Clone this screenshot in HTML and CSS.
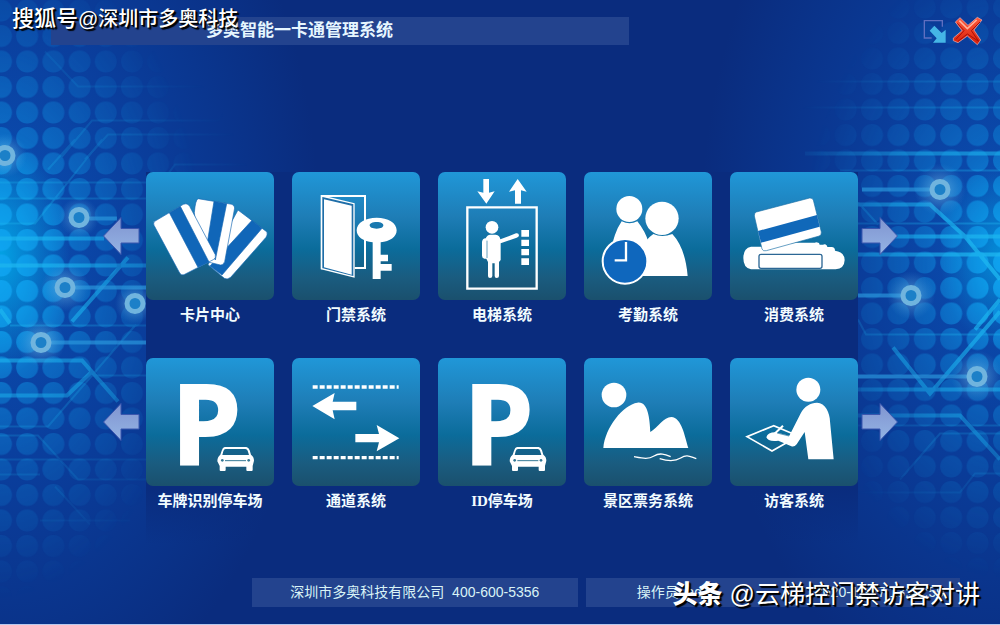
FILE: index.html
```html
<!DOCTYPE html>
<html lang="zh-CN">
<head>
<meta charset="utf-8">
<meta name="viewport" content="width=device-width, initial-scale=1">
<title>多奥智能一卡通管理系统</title>
<link rel="stylesheet" href="styles.css">
</head>
<body>
<div class="page">
  <div class="backdrop" aria-hidden="true">
    <svg class="circuit" viewBox="0 0 320 625" preserveAspectRatio="xMinYMid slice">
      <defs>
        <pattern id="dotsL" x="-12" y="49" width="26.2" height="25.5" patternUnits="userSpaceOnUse"><circle cx="13" cy="13" r="11"/></pattern>
        <radialGradient id="fadeL" gradientUnits="userSpaceOnUse" cx="0" cy="0" r="1" gradientTransform="translate(-10 265) scale(215 335)">
          <stop offset="0" stop-color="#fff"/><stop offset=".2" stop-color="#fff" stop-opacity=".7"/><stop offset=".4" stop-color="#fff" stop-opacity=".38"/><stop offset=".65" stop-color="#fff" stop-opacity=".2"/><stop offset="1" stop-color="#fff" stop-opacity="0"/>
        </radialGradient>
        <radialGradient id="lineFadeL" gradientUnits="userSpaceOnUse" cx="0" cy="0" r="1" gradientTransform="translate(0 280) scale(270 300)">
          <stop offset="0" stop-color="#fff"/><stop offset=".5" stop-color="#fff" stop-opacity=".5"/><stop offset="1" stop-color="#fff" stop-opacity="0"/>
        </radialGradient>
        <radialGradient id="glow"><stop offset="0" stop-color="#8fd0f0" stop-opacity=".6"/><stop offset=".5" stop-color="#6cb8e8" stop-opacity=".3"/><stop offset="1" stop-color="#4aa0e0" stop-opacity="0"/></radialGradient>
        <mask id="maskL" maskUnits="userSpaceOnUse" x="0" y="0" width="320" height="625"><rect width="320" height="625" fill="url(#fadeL)"/></mask>
        <mask id="lineMaskL" maskUnits="userSpaceOnUse" x="0" y="0" width="320" height="625"><rect width="320" height="625" fill="url(#lineFadeL)"/></mask>
      </defs>
      <g mask="url(#maskL)">
        <rect class="dots-left" width="320" height="625"/>
      </g>
      <g mask="url(#lineMaskL)">
        <g class="thin">
          <path d="M45 52 78 87H220"/><path d="M62 157 92 121H218L233 102"/><path d="M85 160 108 135H290"/>
          <path d="M0 183H146M0 199H150L175 165H270M0 224H35L102 140M48 170 75 140"/>
          <path d="M10 326H146M92 376H146M0 427H48L136 325M0 436H38L78 480H146M0 460H146M0 475H40M55 487 90 525M40 521H130"/>
        </g>
        <g class="thick">
          <path d="M0 239H104M0 266H146M0 361H82L118 402M0 396H67L92 372M72 322 128 258M0 310 10 324"/>
        </g>
      </g>
      <g class="links"><path d="M88 219H117M74 288H146M50 343H146"/></g>
      <g fill="url(#glow)"><circle cx="79" cy="218" r="20"/><circle cx="65" cy="288" r="24"/><circle cx="135" cy="304" r="20"/><circle cx="41" cy="343" r="24"/><circle cx="5" cy="156" r="22"/></g>
      <g class="nodes"><circle cx="79" cy="218" r="8"/><circle cx="65" cy="288" r="8"/><circle cx="135" cy="304" r="8"/><circle cx="41" cy="343" r="8"/><circle cx="5" cy="156" r="8"/></g>
    </svg>
    <svg class="circuit circuit-right" viewBox="680 0 320 625" preserveAspectRatio="xMaxYMid slice">
      <defs>
        <pattern id="dotsR" x="859" y="46" width="26.4" height="25.5" patternUnits="userSpaceOnUse"><circle cx="13" cy="13" r="11"/></pattern>
        <radialGradient id="fadeR" gradientUnits="userSpaceOnUse" cx="0" cy="0" r="1" gradientTransform="translate(1010 265) scale(210 315)">
          <stop offset="0" stop-color="#fff"/><stop offset=".2" stop-color="#fff" stop-opacity=".6"/><stop offset=".4" stop-color="#fff" stop-opacity=".34"/><stop offset=".65" stop-color="#fff" stop-opacity=".18"/><stop offset="1" stop-color="#fff" stop-opacity="0"/>
        </radialGradient>
        <radialGradient id="lineFadeR" gradientUnits="userSpaceOnUse" cx="0" cy="0" r="1" gradientTransform="translate(1000 260) scale(230 300)">
          <stop offset="0" stop-color="#fff"/><stop offset=".5" stop-color="#fff" stop-opacity=".6"/><stop offset="1" stop-color="#fff" stop-opacity="0"/>
        </radialGradient>
        <mask id="maskR" maskUnits="userSpaceOnUse" x="680" y="0" width="320" height="625"><rect x="680" width="320" height="625" fill="url(#fadeR)"/></mask>
        <mask id="lineMaskR" maskUnits="userSpaceOnUse" x="680" y="0" width="320" height="625"><rect x="680" width="320" height="625" fill="url(#lineFadeR)"/></mask>
      </defs>
      <g mask="url(#maskR)">
        <rect class="dots-right" x="680" width="320" height="625"/>
      </g>
      <g mask="url(#lineMaskR)">
        <g class="thin">
          <path d="M780 82H1000M780 108H1000M840 171H1000M858 203 878 225M858 224H1000M858 320 866 335H1000M858 426H1000M900 480 940 434H1000M858 493H960L975 474H1000"/>
        </g>
        <g class="thick">
          <path d="M805 154H1000M858 205H930L965 237 1000 280M890 237H1000M858 255H1000M893 348 930 394 1000 312M858 390H1000M858 416H960L1000 460M975 330 1000 300"/>
        </g>
      </g>
      <g class="links"><path d="M862 190H931M858 296H902M858 377H968"/></g>
      <g fill="url(#glow)"><circle cx="940" cy="190" r="26"/><circle cx="911" cy="296" r="24"/><circle cx="977" cy="377" r="26"/></g>
      <g class="nodes"><circle cx="940" cy="190" r="8"/><circle cx="911" cy="296" r="8"/><circle cx="977" cy="377" r="8"/></g>
    </svg>
  </div>

  <svg class="defs" aria-hidden="true">
    <defs>
      <linearGradient id="arrowFill" x1="0" y1="0" x2="0" y2="1"><stop offset="0" stop-color="#8094d0"/><stop offset="1" stop-color="#94b4e4"/></linearGradient>
      <linearGradient id="redFill" x1="0" y1="0" x2="0" y2="1"><stop offset="0" stop-color="#ff5a3c"/><stop offset="1" stop-color="#d81e08"/></linearGradient>
      <symbol id="arrow" viewBox="0 0 38 40"><path d="M1.500 20 19 1.500V12.500H37V27H19V38.500Z" fill="url(#arrowFill)" stroke="#3a56ae"/></symbol>
      <symbol id="car" viewBox="230 288 116 78">
        <path fill="#fff" fill-rule="evenodd" d="M256 291H321Q328 292 331 301L335 314Q344 320 344 332L340 348V360Q340 363 337 363H324Q321 363 321 360V350H259V360Q259 363 256 363H244Q241 363 241 360V348L234 334Q234 320 243 314L247 302Q250 292 256 291ZM259 297Q254 297 252 304L249 315H329L325 302Q323 297 318 297Z"/>
        <path d="M257 332H320" stroke="#347895" stroke-width="3"/><circle cx="249" cy="331" r="4" fill="#347895"/><circle cx="328" cy="331" r="4" fill="#347895"/>
      </symbol>
    </defs>
  </svg>

  <header class="topbar">
    <h1 class="title">多奥智能一卡通管理系统</h1>
    <div class="window-actions">
      <button class="plain" type="button" aria-label="最小化">
        <svg width="26" height="26" viewBox="0 0 78 78"><path d="M64 26V8H10V60H32" fill="none" stroke="#5f6fc0" stroke-width="4"/><path d="M26 38 40 23 62 45 74 35V74H36L47 61Z" fill="#45b6e6"/></svg>
      </button>
      <button class="plain" type="button" aria-label="关闭">
        <svg width="32" height="30" viewBox="0 0 96 90"><path d="M10 18 24 5 48 28 76 4 90 12 66 42 86 72 76 86 46 60 18 80 4 74V66L30 44Z" fill="url(#redFill)" stroke="#e8b8c0" stroke-width="2"/><path d="M22 14 46 38 74 12" fill="none" stroke="#ffb09a" stroke-width="5"/><path d="M16 22 36 44 12 70M84 18 58 44 80 76 46 54 18 76" fill="none" stroke="#a80f08" stroke-width="3"/></svg>
      </button>
    </div>
  </header>

  <main class="modules">
    <section class="module-row">
      <button class="plain pager" type="button" aria-label="上一页"><svg width="38" height="40"><use href="#arrow"/></svg></button>
      <div class="tiles">
        <button class="tile" type="button">
          <svg class="icon" viewBox="18 36 384 384">
            <g stroke="#1668b4" stroke-width="2">
              <path d="M294 150 381 216Q383 225 378 232L272 352Q262 360 253 355L204 314Z" fill="#fff"/>
              <path d="M336 181 366 205 246 345 210 318Z" fill="#1066b8"/>
              <path d="M174 116 276 133Q284 137 284 144L254 305Q250 316 241 315L180 300 163 158Q166 120 174 116Z" fill="#fff"/>
              <path d="M222 124 260 131 226 300 200 260Z" fill="#1066b8"/>
              <path d="M44 184 130 133Q143 128 149 139L226 284Q229 294 220 299L132 344Q124 347 119 339L42 196Q39 189 44 184Z" fill="#fff"/>
              <path d="M88 158 121 139 207 306 174 322Z" fill="#1066b8"/>
            </g>
          </svg>
          <span class="label">卡片中心</span>
        </button>
        <button class="tile" type="button">
          <svg class="icon" viewBox="454 36 384 384">
            <path d="M543 328V108H673V324H642" fill="none" stroke="#fff" stroke-width="6"/>
            <path d="M543 108 640 131V351L543 326Z" fill="#1f6ea8" stroke="#fff" stroke-width="4"/>
            <path d="M550 118 633 137V344L550 322Z" fill="#fff"/>
            <path fill="#fff" fill-rule="evenodd" d="M708 173C742 173 768 188 768 211 768 231 748 244 720 247V284H742V304H720V312H753V332H720V357H696V247C668 244 648 231 648 211 648 188 674 173 708 173ZM708 186C695 186 687 190 687 196S695 206 708 206 728 202 728 196 721 186 708 186Z"/>
          </svg>
          <span class="label">门禁系统</span>
        </button>
        <button class="tile" type="button">
          <svg class="icon" viewBox="21 36 384 384">
            <path d="M109 142H317V386H109Z" fill="none" stroke="#fff" stroke-width="7"/>
            <g fill="#fff">
              <path d="M157 57H174V98L191 94 166 131 139 94 157 98ZM252 131V91L234 95 260 57 287 95 270 91V131Z"/>
              <circle cx="183" cy="202" r="19"/>
              <path d="M178 224H194Q207 226 208 238L255 220Q263 218 264 226 264 231 257 233L209 250V300L204 306V348Q204 354 197 354 191 354 191 348V310H184V348Q184 354 177 354 171 354 171 348V306L166 296H160Q153 294 153 287V246Q154 236 164 235 168 225 178 224Z"/>
              <path d="M271 210H294V230H271ZM271 239H294V258H271ZM271 267H294V286H271ZM271 295H294V315H271Z"/>
            </g>
            <path d="M168 242V294" stroke="#1a709d" stroke-width="2"/>
          </svg>
          <span class="label">电梯系统</span>
        </button>
        <button class="tile" type="button">
          <svg class="icon" viewBox="460 36 384 384">
            <g fill="#fff">
              <circle cx="596" cy="147" r="39"/>
              <path d="M573 184Q597 196 620 184 644 214 654 248L630 300H534Q548 220 573 184Z"/>
              <circle cx="694" cy="175" r="50"/>
              <path d="M668 222Q694 234 725 222 764 264 771 348H630V270Q642 240 668 222Z"/>
            </g>
            <circle cx="583" cy="304" r="67" fill="#0f67bd" stroke="#fff" stroke-width="6"/>
            <path d="M586 246V301H552" fill="none" stroke="#fff" stroke-width="7"/>
          </svg>
          <span class="label">考勤系统</span>
        </button>
        <button class="tile" type="button">
          <svg class="icon" viewBox="29 36 384 384">
            <path d="M92 260H125L230 248H284Q286 245 296 249L298 254H308Q314 250 320 257L321 261H332Q344 260 344 272 372 276 373 300 372 326 346 328H92Q69 324 69 294T92 260Z" fill="#fff"/>
            <rect x="116" y="283" width="189" height="42" rx="6" fill="#fff" stroke="#2c6795" stroke-width="4"/>
            <path d="M108 156 268 114Q276 113 279 120L303 216Q304 224 297 228L138 272Q128 275 125 267L102 168Q101 159 108 156Z" fill="#fff" stroke="#1c71a8" stroke-width="2"/>
            <path d="M113 213 290 165 298 200 122 248Z" fill="#1068b9"/>
          </svg>
          <span class="label">消费系统</span>
        </button>
      </div>
      <button class="plain pager" type="button" aria-label="下一页"><svg class="flip" width="38" height="40"><use href="#arrow"/></svg></button>
    </section>

    <section class="module-row">
      <button class="plain pager" type="button" aria-label="上一页"><svg width="38" height="40"><use href="#arrow"/></svg></button>
      <div class="tiles tiles-last">
        <button class="tile" type="button">
          <svg class="icon" viewBox="20 24 384 384">
            <text class="letter" x="95" y="343">P</text>
            <use href="#car" x="230" y="288" width="116" height="78"/>
          </svg>
          <span class="label">车牌识别停车场</span>
        </button>
        <button class="tile" type="button">
          <svg class="icon" viewBox="458 24 384 384">
            <path d="M520 111H778M520 323H778" stroke="#fff" stroke-width="10" stroke-dasharray="15 6"/>
            <path d="M519 168 586 129 580 155H651V181H580L586 208ZM780 265 712 225 719 252H648V277H719L712 304Z" fill="#fff"/>
          </svg>
          <span class="label">通道系统</span>
        </button>
        <button class="tile" type="button">
          <svg class="icon" viewBox="25 24 384 384">
            <text class="letter" x="101" y="343">P</text>
            <use href="#car" x="236" y="288" width="116" height="78"/>
          </svg>
          <span class="label">ID停车场</span>
        </button>
        <button class="tile" type="button">
          <svg class="icon" viewBox="462 24 384 384">
            <circle cx="552" cy="135" r="37" fill="#fff"/>
            <path d="M520 294C525 232 580 164 622 158 654 153 659 204 661 246 684 232 701 201 724 201 755 203 764 258 775 294Z" fill="#fff"/>
            <path d="M612 320C638 325 655 329 672 318S705 313 722 320M689 326C712 333 733 336 752 324S780 320 799 326" fill="none" stroke="#fff" stroke-width="4"/>
          </svg>
          <span class="label">景区票务系统</span>
        </button>
        <button class="tile" type="button">
          <svg class="icon" viewBox="31 24 384 384">
            <path d="M162 227 82 260 157 303 236 258Z" fill="none" stroke="#fff" stroke-width="5"/>
            <circle cx="266" cy="119" r="36" fill="#fff"/>
            <path d="M292 158C317 158 331 190 331 214L342 328H266L255 246 231 283Q224 292 215 289L176 272Q145 276 140 262 144 247 167 247L209 257 244 188C255 169 272 158 292 158Z" fill="#fff"/>
            <path d="M190 227 164 252" stroke="#fff" stroke-width="6"/>
            <path d="M172 249 208 258" stroke="#1a6c9a" stroke-width="2"/>
          </svg>
          <span class="label">访客系统</span>
        </button>
      </div>
      <button class="plain pager" type="button" aria-label="下一页"><svg class="flip" width="38" height="40"><use href="#arrow"/></svg></button>
    </section>
  </main>

  <footer class="statusbar">
    <p class="status company">深圳市多奥科技有限公司&nbsp; 400-600-5356</p>
    <p class="status session"><span>操作员: ad</span><time>2020-11-27 13:47:59</time></p>
  </footer>

  <p class="mark mark-top"><span class="mark-source">搜狐号</span>@深圳市多奥科技</p>
  <p class="mark mark-bottom"><b class="mark-brand">头条</b><span>@云梯控门禁访客对讲</span></p>
</div>
</body>
</html>
```

FILE: styles.css
```css
* {
  box-sizing: border-box;
}

body {
  margin: 0;
  color: #fff;
  font-family: "Liberation Sans", "Noto Sans CJK SC", sans-serif;
}

h1,
p {
  margin: 0;
}

.page {
  position: relative;
  display: flex;
  flex-direction: column;
  min-height: 100vh;
  overflow: hidden;
  border-bottom: 1px solid #b9c9ee;
  background:
    radial-gradient(ellipse 70px 120px at 0 41%, rgba(0, 190, 245, 0.75), transparent),
    radial-gradient(ellipse 60px 90px at 100% 41%, rgba(0, 180, 240, 0.6), transparent),
    radial-gradient(ellipse 320px 500px at 0 38%, #0b50b4, rgba(10, 70, 170, 0.7) 45%, transparent),
    radial-gradient(ellipse 300px 480px at 100% 38%, #0b50b4, rgba(10, 70, 170, 0.65) 45%, transparent),
    #0a2c7e;
}

/* Decorative circuit board on both sides */
.backdrop {
  position: absolute;
  inset: 0;
}

.circuit {
  position: absolute;
  top: 0;
  left: 0;
  width: 320px;
  height: 100%;
}

.circuit-right {
  right: 0;
  left: auto;
}

.dots-left {
  fill: url(#dotsL);
}

.dots-right {
  fill: url(#dotsR);
}

pattern circle {
  fill: #10a4f0;
}

.thin,
.thick,
.links {
  fill: none;
  stroke: #1cb4ee;
}

.thin {
  stroke-width: 2;
  opacity: 0.45;
}

.thick {
  stroke-width: 4;
  opacity: 0.85;
}

.links {
  stroke: #2a95dc;
  stroke-width: 4;
  opacity: 0.7;
}

.nodes {
  fill: #1c80c8;
  stroke: #70b4de;
  stroke-width: 5;
}

.defs {
  position: absolute;
  width: 0;
  height: 0;
}

.plain {
  display: flex;
  align-items: center;
  justify-content: center;
  padding: 0;
  border: 0;
  background: none;
  cursor: pointer;
}

/* Title bar */
.topbar {
  position: relative;
  display: flex;
  align-items: center;
  justify-content: space-between;
  padding: 16px 16px 0 51px;
}

.title {
  width: 62%;
  padding-left: 155px;
  background: #23438e;
  color: #e6f6ff;
  font-size: 17px;
  line-height: 28px;
}

.window-actions {
  display: flex;
  align-items: center;
  gap: 5px;
}

/* Module tiles */
.modules {
  position: relative;
  flex: 1;
  padding: 126px 0 0 4px;
}

.module-row {
  display: flex;
  align-items: flex-start;
  justify-content: center;
}

.pager {
  justify-content: flex-start;
  width: 44px;
  height: 128px;
}

.tiles + .pager {
  justify-content: center;
}

.flip {
  transform: scaleX(-1);
}

.tiles {
  display: grid;
  grid-template-columns: repeat(5, 128px);
  gap: 18px;
  padding-bottom: 33px;
  background: #0a2c7e;
}

.tiles-last {
  background: linear-gradient(#0a2c7e 70%, transparent);
}

.tile {
  display: flex;
  flex-direction: column;
  align-items: center;
  gap: 5px;
  padding: 0;
  border: 0;
  background: none;
  color: #f2fcff;
  font-family: "Liberation Serif", "Noto Sans CJK SC", sans-serif;
  font-size: 15px;
  font-weight: 700;
  line-height: 20px;
  white-space: nowrap;
  cursor: pointer;
}

.icon {
  display: block;
  width: 128px;
  height: 128px;
  border-radius: 7px;
  background: linear-gradient(#2097d8, #1e7db6 35%, #0b6c9b 60%, #1a5c80 82%, #1a506d);
}

.letter {
  fill: #fff;
  stroke: #fff;
  stroke-width: 6px;
  font-family: "Open Sans", "Noto Sans", sans-serif;
  font-size: 336px;
  font-weight: 700;
}

/* Status bar */
.statusbar {
  position: relative;
  display: flex;
  gap: 8px;
  padding: 0 40px 17px 252px;
}

.status {
  background: #23438e;
  color: #d9f3f6;
  font-size: 14px;
  line-height: 29px;
  white-space: nowrap;
}

.company {
  flex: none;
  width: 46%;
  text-align: center;
}

.session {
  display: flex;
  flex: 1;
  justify-content: space-between;
  padding: 0 16px 0 51px;
}

/* Publisher marks laid over the screen */
.mark {
  position: absolute;
  display: flex;
  align-items: center;
  text-shadow: 1px 1px 1px #000, 2px 2px 1px #000;
  white-space: nowrap;
}

.mark-top {
  top: 4px;
  left: 12px;
  font-size: 20px;
  font-weight: 500;
  line-height: 30px;
}

.mark-source {
  font-size: 22px;
}

.mark-bottom {
  right: 20px;
  bottom: 12px;
  gap: 7px;
  font-size: 25px;
  line-height: 36px;
}

.mark-brand {
  font-weight: 900;
}
```
